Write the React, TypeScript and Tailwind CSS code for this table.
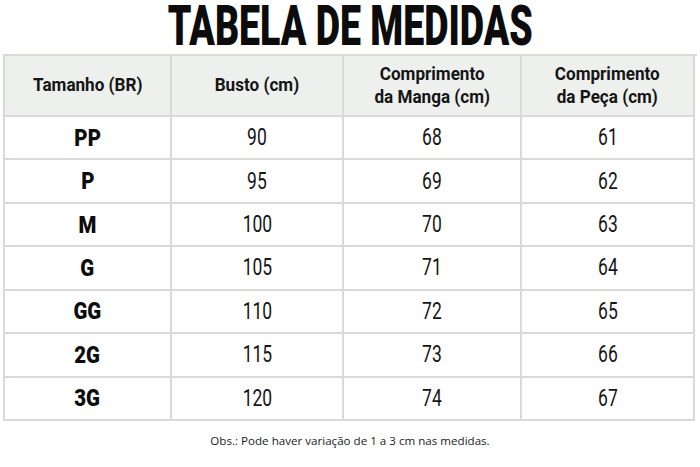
const rows = [
  { size: "PP", busto: "90", manga: "68", peca: "61" },
  { size: "P", busto: "95", manga: "69", peca: "62" },
  { size: "M", busto: "100", manga: "70", peca: "63" },
  { size: "G", busto: "105", manga: "71", peca: "64" },
  { size: "GG", busto: "110", manga: "72", peca: "65" },
  { size: "2G", busto: "115", manga: "73", peca: "66" },
  { size: "3G", busto: "120", manga: "74", peca: "67" },
];

const cell =
  "flex items-center justify-center border-r-2 border-b-2 border-[#d7dad7] text-center";

function HeadCell({ top, bottom }: { top: string; bottom?: string }) {
  return (
    <div className={`${cell} bg-[#eef0ee]`}>
      <span className="inline-block scale-x-[0.9] whitespace-nowrap text-[19px] font-bold leading-[22.4px] text-[#151515]">
        {top}
        {bottom && <br />}
        {bottom}
      </span>
    </div>
  );
}

export default function App() {
  return (
    <div className="h-[467px] w-[700px] overflow-hidden bg-white font-[Roboto,sans-serif]">
      <div className="flex h-[54px] justify-center">
        <h1 className="inline-block scale-x-[0.67] whitespace-nowrap text-[56px] font-black leading-[52px] text-[#0c0c0c]">
          TABELA DE MEDIDAS
        </h1>
      </div>

      <div className="ml-[3px] grid w-[694px] grid-cols-[167px_172px_178px_173px] grid-rows-[61px_repeat(7,43.43px)] border-l-2 border-t-2 border-[#d7dad7]">
        <HeadCell top="Tamanho (BR)" />
        <HeadCell top="Busto (cm)" />
        <HeadCell top="Comprimento" bottom="da Manga (cm)" />
        <HeadCell top="Comprimento" bottom="da Peça (cm)" />

        {rows.map((r) => (
          <div key={r.size} className="contents">
            <div className={cell}>
              <span className="inline-block scale-x-[0.85] text-[24px] font-black leading-none text-[#0c0c0c]">
                {r.size}
              </span>
            </div>
            {[r.busto, r.manga, r.peca].map((v, i) => (
              <div key={i} className={cell}>
                <span className="inline-block scale-x-[0.76] text-[23px] font-normal leading-none text-[#161616]">
                  {v}
                </span>
              </div>
            ))}
          </div>
        ))}
      </div>

      <p className="mt-[12px] text-center font-['Open_Sans',sans-serif] text-[11.6px] leading-[16px] text-[#1c1c1c]">
        Obs.: Pode haver variação de 1 a 3 cm nas medidas.
      </p>
    </div>
  );
}
